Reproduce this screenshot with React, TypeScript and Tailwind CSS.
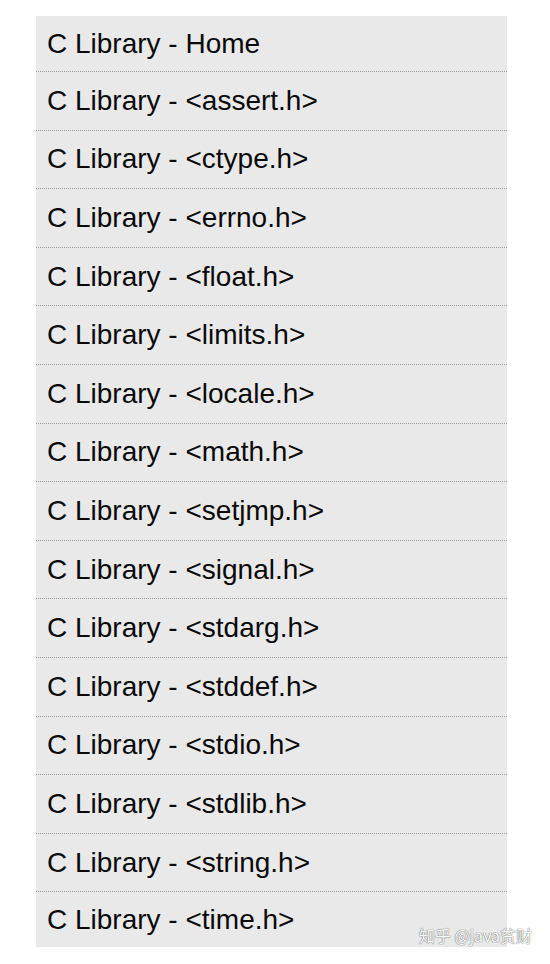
const items = [
  'Home',
  '<assert.h>',
  '<ctype.h>',
  '<errno.h>',
  '<float.h>',
  '<limits.h>',
  '<locale.h>',
  '<math.h>',
  '<setjmp.h>',
  '<signal.h>',
  '<stdarg.h>',
  '<stddef.h>',
  '<stdio.h>',
  '<stdlib.h>',
  '<string.h>',
  '<time.h>',
];

export default function App() {
  return (
    <div className="relative w-[550px] h-[964px] bg-white pt-4 pl-9 overflow-hidden">
      <ul className="w-[471px] bg-[#e9e9e9] font-['Liberation_Sans',Arial,sans-serif] text-[28px] text-[#0a0a0a]">
        {items.map((name, i) => (
          <li
            key={name}
            className={
              'flex items-center pl-[11px] ' +
              (i === 0
                ? 'h-[56px] border-b border-dotted border-[#9a9a9a]'
                : i === items.length - 1
                  ? 'h-[55px]'
                  : 'h-[58.6px] border-b border-dotted border-[#9a9a9a]')
            }
          >
            C Library - {name}
          </li>
        ))}
      </ul>

      {/* watermark */}
      <div className="absolute left-[419px] top-[923px] text-[16px] text-white font-['Noto_Sans_CJK_SC',sans-serif] [text-shadow:0_0_1px_#666,0_0_1px_#666]">
        知乎 @java贫财
      </div>
    </div>
  );
}
